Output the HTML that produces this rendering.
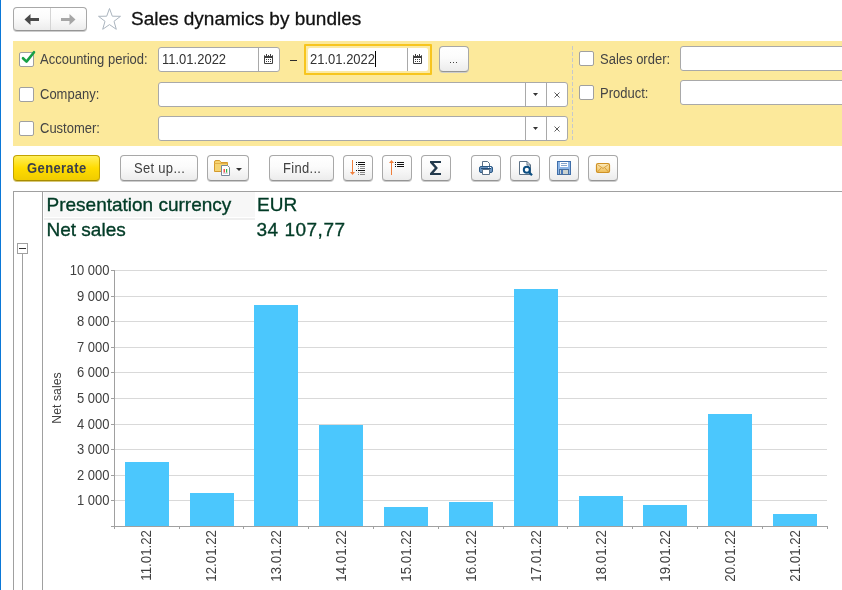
<!DOCTYPE html>
<html><head><meta charset="utf-8">
<style>
*{box-sizing:border-box;margin:0;padding:0}
html,body{width:842px;height:590px;overflow:hidden;background:#fff;font-family:"Liberation Sans",sans-serif;position:relative}
.a{position:absolute}
.t{position:absolute;white-space:nowrap;line-height:1}
.btn{position:absolute;height:26px;border:1px solid #a8a8a8;border-bottom-color:#959595;border-radius:4px;background:linear-gradient(#ffffff 0%,#fbfbfb 45%,#ececec 100%);box-shadow:0 1px 0 #cdcdcd}
.cb{position:absolute;width:15px;height:15px;background:#fff;border:1px solid #a0a0a0;border-radius:2px}
.lbl{position:absolute;white-space:nowrap;font-size:13px;color:#444;line-height:13px;transform:scaleY(1.1);transform-origin:0 0}
.inp{position:absolute;background:#fff;border:1px solid #a9a9a9;border-radius:3px}
.vd{position:absolute;top:0;bottom:0;width:1px;background:#a9a9a9}
.bt{position:absolute;white-space:nowrap;font-size:13px;color:#404040;line-height:13px;letter-spacing:0.3px;transform:scaleY(1.1);transform-origin:0 0}
svg{position:absolute;overflow:visible}
</style></head><body><div style="position:absolute;left:0;top:0;width:842px;height:590px;will-change:transform">
<!-- left blue edge -->
<div class="a" style="left:0;top:0;width:1px;height:590px;background:#0b78d7"></div>

<!-- nav buttons -->
<div class="btn" style="left:13px;top:7px;width:74px;height:24px"></div>
<div class="a" style="left:50px;top:8px;width:1px;height:22px;background:#d4d4d4"></div>
<svg style="left:24px;top:13px" width="16" height="13" viewBox="0 0 16 13"><path d="M0.5 6.5 L6.5 1 V5 H15 V8 H6.5 V12 Z" fill="#4a4a4a"/></svg>
<svg style="left:60px;top:13px" width="16" height="13" viewBox="0 0 16 13"><path d="M15.5 6.5 L9.5 1 V5 H1 V8 H9.5 V12 Z" fill="#a6a6a6"/></svg>
<!-- star -->
<svg style="left:97px;top:7px" width="25" height="24" viewBox="0 0 25 24"><path d="M12.5 1.5 L15.3 9.2 L23.5 9.3 L17 14.3 L19.3 22.3 L12.5 17.6 L5.7 22.3 L8 14.3 L1.5 9.3 L9.7 9.2 Z" fill="none" stroke="#aab4be" stroke-width="1"/></svg>
<div class="t" style="left:131px;top:9px;font-size:19px;color:#111;-webkit-text-stroke:0.3px #111">Sales dynamics by bundles</div>

<!-- filter panel -->
<div class="a" style="left:13px;top:41px;width:829px;height:105px;background:#fce99b"></div>
<!-- row 1 -->
<div class="cb" style="left:19px;top:52px"></div>
<svg style="left:20px;top:49px" width="17" height="16" viewBox="0 0 17 16"><path d="M3 9.2 L6.5 12.6 L14 3.2" fill="none" stroke="#17a045" stroke-width="2.6" stroke-linecap="round" stroke-linejoin="round"/></svg>
<div class="lbl" style="left:40px;top:52px">Accounting period:</div>
<div class="inp" style="left:158px;top:47px;width:122px;height:25px"><div class="vd" style="left:99px"></div></div>
<svg style="left:264px;top:54px" width="10" height="10" viewBox="0 0 10 10" id="cal1"><g fill="#404040"><rect x="0" y="1" width="9" height="9" rx="1"/></g><rect x="1" y="4" width="7" height="5" fill="#fff"/><g fill="#404040"><rect x="2" y="5" width="1" height="1"/><rect x="4" y="5" width="1" height="1"/><rect x="6" y="5" width="1" height="1"/><rect x="2" y="7" width="1" height="1"/><rect x="4" y="7" width="1" height="1"/><rect x="6" y="7" width="1" height="1"/></g><rect x="1" y="1" width="1" height="1" fill="#fff"/><rect x="3" y="1" width="1" height="1" fill="#fff"/><rect x="5" y="1" width="1" height="1" fill="#fff"/><rect x="7" y="1" width="1" height="1" fill="#fff"/><rect x="2" y="0" width="1" height="2" fill="#404040"/><rect x="6" y="0" width="1" height="2" fill="#404040"/></svg>
<div class="t" style="left:162px;top:52px;font-size:13px;color:#333;transform:scaleY(1.1);transform-origin:0 0">11.01.2022</div>
<div class="a" style="left:290px;top:60px;width:7px;height:1px;background:#2d2d2d"></div>
<div class="a" style="left:304px;top:44px;width:128px;height:31px;border:2px solid #f7c51e;border-radius:1px;background:#fbeaa5"></div>
<div class="a" style="left:308px;top:48px;width:120px;height:23px;border-radius:2px;background:#fff"></div>
<div class="a" style="left:407px;top:48px;width:1px;height:23px;background:#a9a9a9"></div>
<svg style="left:413px;top:54px" width="10" height="10" viewBox="0 0 10 10"><g fill="#404040"><rect x="0" y="1" width="9" height="9" rx="1"/></g><rect x="1" y="4" width="7" height="5" fill="#fff"/><g fill="#404040"><rect x="2" y="5" width="1" height="1"/><rect x="4" y="5" width="1" height="1"/><rect x="6" y="5" width="1" height="1"/><rect x="2" y="7" width="1" height="1"/><rect x="4" y="7" width="1" height="1"/><rect x="6" y="7" width="1" height="1"/></g><rect x="1" y="1" width="1" height="1" fill="#fff"/><rect x="3" y="1" width="1" height="1" fill="#fff"/><rect x="5" y="1" width="1" height="1" fill="#fff"/><rect x="7" y="1" width="1" height="1" fill="#fff"/><rect x="2" y="0" width="1" height="2" fill="#404040"/><rect x="6" y="0" width="1" height="2" fill="#404040"/></svg>
<div class="t" style="left:310px;top:52px;font-size:13px;color:#333;transform:scaleY(1.1);transform-origin:0 0">21.01.2022</div>
<div class="a" style="left:375px;top:51px;width:1px;height:16px;background:#000"></div>
<div class="btn" style="left:439px;top:46px;width:30px;height:26px"></div>
<div class="a" style="left:450px;top:62px;width:1px;height:1px;background:#444"></div>
<div class="a" style="left:453px;top:62px;width:1px;height:1px;background:#444"></div>
<div class="a" style="left:456px;top:62px;width:1px;height:1px;background:#444"></div>
<!-- row 2 company -->
<div class="cb" style="left:19px;top:87px"></div>
<div class="lbl" style="left:40px;top:87px">Company:</div>
<div class="inp" style="left:158px;top:82px;width:410px;height:25px"><div class="vd" style="left:366px"></div><div class="vd" style="left:387px"></div></div>
<svg style="left:533px;top:93px" width="5" height="3" viewBox="0 0 5 3"><path d="M0 0 H5 L2.5 3 Z" fill="#333"/></svg>
<svg style="left:554px;top:92px" width="6" height="6" viewBox="0 0 6 6"><path d="M0.5 0.5 L5.5 5.5 M5.5 0.5 L0.5 5.5" stroke="#4a4a4a" stroke-width="0.9"/></svg>
<!-- row 3 customer -->
<div class="cb" style="left:19px;top:121px"></div>
<div class="lbl" style="left:40px;top:121px">Customer:</div>
<div class="inp" style="left:158px;top:116px;width:410px;height:25px"><div class="vd" style="left:366px"></div><div class="vd" style="left:387px"></div></div>
<svg style="left:533px;top:127px" width="5" height="3" viewBox="0 0 5 3"><path d="M0 0 H5 L2.5 3 Z" fill="#333"/></svg>
<svg style="left:554px;top:126px" width="6" height="6" viewBox="0 0 6 6"><path d="M0.5 0.5 L5.5 5.5 M5.5 0.5 L0.5 5.5" stroke="#4a4a4a" stroke-width="0.9"/></svg>
<!-- dashed separator -->
<div class="a" style="left:572px;top:46px;width:1px;height:95px;background:repeating-linear-gradient(#c6c8cc 0 4px,transparent 4px 6px)"></div>
<!-- right col -->
<div class="cb" style="left:579px;top:51px"></div>
<div class="lbl" style="left:600px;top:52px">Sales order:</div>
<div class="inp" style="left:680px;top:46px;width:200px;height:25px"></div>
<div class="cb" style="left:579px;top:85px"></div>
<div class="lbl" style="left:600px;top:86px">Product:</div>
<div class="inp" style="left:680px;top:80px;width:200px;height:25px"></div>

<!-- toolbar -->
<div class="a" style="left:13px;top:155px;width:87px;height:26px;border:1px solid #c2a200;border-bottom-color:#a88c00;border-radius:4px;background:linear-gradient(#ffee5a,#ffdc00 50%,#f0cc00);box-shadow:0 1px 0 #d8c878"></div>
<div class="t" style="left:27px;top:161px;font-size:13px;font-weight:bold;color:#3b3f4c;letter-spacing:0.4px;transform:scaleY(1.1);transform-origin:0 0">Generate</div>
<div class="btn" style="left:120px;top:155px;width:78px"></div>
<div class="bt" style="left:134px;top:161px">Set up...</div>
<div class="btn" style="left:207px;top:155px;width:42px"></div>
<!-- folder + doc icon -->
<svg style="left:213px;top:159px" width="20" height="18" viewBox="0 0 20 18">
<path d="M1.5 12.5 V3 Q1.5 1.5 3 1.5 H6 Q7 1.5 7.5 2.5 L8 3.5 H14.5 V12.5 Z" fill="#f5d472" stroke="#d49a2c" stroke-width="1"/>
<path d="M1.5 4.5 H14.5" stroke="#e2b04a" stroke-width="1"/>
<path d="M8.5 6.5 H14.5 L16.5 8.5 V16.5 H8.5 Z" fill="#fff" stroke="#75889a" stroke-width="1"/>
<rect x="10.6" y="10" width="1.2" height="3.6" fill="#f02828"/><rect x="13" y="10" width="1.2" height="3.6" fill="#28b840"/><rect x="10" y="13.8" width="5" height="0.6" fill="#99a"/>
</svg>
<svg style="left:236px;top:168px" width="6" height="3" viewBox="0 0 6 3"><path d="M0 0 H6 L3 3 Z" fill="#333"/></svg>
<div class="btn" style="left:269px;top:155px;width:65px"></div>
<div class="bt" style="left:283px;top:161px">Find...</div>
<!-- sort desc -->
<div class="btn" style="left:343px;top:155px;width:30px"></div>
<svg style="left:343px;top:155px" width="30" height="26" viewBox="0 0 30 26">
<rect x="9" y="5" width="1" height="14" fill="#f07f3c"/><path d="M7 17 H12 L9.5 20 Z" fill="#f07f3c"/>
<g fill="#111"><rect x="13" y="7" width="1" height="1"/><rect x="15" y="7" width="7" height="1"/><rect x="13" y="9" width="1" height="1"/><rect x="15" y="9" width="7" height="1"/><rect x="13" y="15" width="1" height="1"/><rect x="15" y="15" width="7" height="1"/></g>
<g fill="#888"><rect x="15" y="11" width="1" height="1"/><rect x="17" y="11" width="5" height="1"/><rect x="15" y="13" width="1" height="1"/><rect x="17" y="13" width="5" height="1"/><rect x="15" y="17" width="1" height="1"/><rect x="17" y="17" width="5" height="1"/><rect x="15" y="19" width="1" height="1"/><rect x="17" y="19" width="5" height="1"/></g>
</svg>
<!-- sort asc -->
<div class="btn" style="left:382px;top:155px;width:30px"></div>
<svg style="left:382px;top:155px" width="30" height="26" viewBox="0 0 30 26">
<rect x="9" y="6" width="1" height="14" fill="#f07f3c"/><path d="M7 8 H12 L9.5 5 Z" fill="#f07f3c"/>
<g fill="#111"><rect x="13" y="7" width="1" height="1"/><rect x="15" y="7" width="7" height="1"/><rect x="13" y="9" width="1" height="1"/><rect x="15" y="9" width="7" height="1"/><rect x="13" y="11" width="1" height="1"/><rect x="15" y="11" width="7" height="1"/></g>
</svg>
<!-- sigma -->
<div class="btn" style="left:421px;top:155px;width:30px"></div>
<svg style="left:421px;top:155px" width="30" height="26" viewBox="0 0 30 26"><path d="M9 6 H20 V8 H12.6 L16.9 13 L12.6 18 H20 V20 H9 V18.3 L13.8 13 L9 7.7 Z" fill="#233a4d"/></svg>
<!-- print -->
<div class="btn" style="left:471px;top:155px;width:30px"></div>
<svg style="left:471px;top:155px" width="30" height="26" viewBox="0 0 30 26">
<path d="M11.5 6.5 H16.5 L18.5 8.5 V11.5 H11.5 Z" fill="#fff" stroke="#5a7088" stroke-width="1"/>
<rect x="8.5" y="11.5" width="13" height="6" rx="1.5" fill="#6f97c2" stroke="#2c5a86" stroke-width="1"/>
<rect x="10" y="13" width="10" height="1" fill="#244f7a"/>
<rect x="17" y="12" width="1" height="1" fill="#fff"/><rect x="19" y="12" width="1" height="1" fill="#fff"/>
<path d="M11.5 14.5 H18.5 V19.5 H11.5 Z" fill="#fff" stroke="#5a7088" stroke-width="1"/>
</svg>
<!-- preview -->
<div class="btn" style="left:510px;top:155px;width:30px"></div>
<svg style="left:510px;top:155px" width="30" height="26" viewBox="0 0 30 26">
<path d="M9.5 6.5 H17 L20.5 10 V19.5 H9.5 Z" fill="#fff" stroke="#5d7185" stroke-width="1"/>
<path d="M17 6.5 V10 H20.5" fill="none" stroke="#5d7185" stroke-width="1"/>
<circle cx="16.8" cy="14.8" r="3" fill="#fff" stroke="#0d4f82" stroke-width="2"/>
<path d="M18.8 17 L22 20.3" stroke="#0d4f82" stroke-width="2.2"/>
</svg>
<!-- save -->
<div class="btn" style="left:549px;top:155px;width:30px"></div>
<svg style="left:549px;top:155px" width="30" height="26" viewBox="0 0 30 26">
<rect x="8.5" y="6.5" width="13" height="13" fill="#8cb5e6" stroke="#3f6ea9" stroke-width="1"/>
<rect x="11" y="7" width="8" height="5" fill="#fff"/>
<rect x="12" y="8" width="6" height="1" fill="#86a6cc"/><rect x="12" y="10" width="6" height="1" fill="#86a6cc"/>
<rect x="10.5" y="14.5" width="9" height="5" fill="#ccd3d0" stroke="#4a6f9c" stroke-width="1"/>
<rect x="12" y="15" width="2" height="4" fill="#4a78b8"/>
</svg>
<!-- mail -->
<div class="btn" style="left:588px;top:155px;width:30px"></div>
<svg style="left:588px;top:155px" width="30" height="26" viewBox="0 0 30 26">
<defs><linearGradient id="mg" x1="0" y1="0" x2="0" y2="1"><stop offset="0" stop-color="#fcebbd"/><stop offset="1" stop-color="#eebd55"/></linearGradient></defs>
<rect x="8.5" y="8.5" width="13" height="9" rx="1.5" fill="url(#mg)" stroke="#cf9226" stroke-width="1.2"/>
<path d="M9.5 9.5 L15 13.5 L20.5 9.5 M9.5 17 L13 13 M20.5 17 L17 13" fill="none" stroke="#d29a38" stroke-width="0.9"/>
</svg>

<!-- report frame -->
<div class="a" style="left:13px;top:191px;width:829px;height:1px;background:#a0a0a0"></div>
<div class="a" style="left:13px;top:191px;width:1px;height:399px;background:#a0a0a0"></div>
<div class="a" style="left:42px;top:191px;width:1px;height:399px;background:#a0a0a0"></div>
<div class="a" style="left:17px;top:243px;width:11px;height:11px;border:1px solid #a0a0a0;background:#fff"></div>
<div class="a" style="left:19px;top:248px;width:7px;height:1px;background:#333"></div>
<div class="a" style="left:22px;top:254px;width:1px;height:336px;background:#a0a0a0"></div>
<div class="a" style="left:44px;top:192px;width:211px;height:25px;background:#f7f7f7"></div>
<div class="a" style="left:44px;top:218px;width:211px;height:2px;background:#efefef"></div>
<div class="t" style="left:46.5px;top:195px;font-size:19px;color:#003b26;-webkit-text-stroke:0.35px #003b26">Presentation currency</div>
<div class="t" style="left:257px;top:195px;font-size:19px;color:#003b26;-webkit-text-stroke:0.35px #003b26">EUR</div>
<div class="t" style="left:46.5px;top:219.5px;font-size:19px;color:#003b26;-webkit-text-stroke:0.35px #003b26">Net sales</div>
<div class="t" style="left:256.5px;top:219.5px;font-size:19px;color:#003b26;-webkit-text-stroke:0.35px #003b26;letter-spacing:0.5px">34 107,77</div>

<!-- chart -->
<svg style="left:0;top:0" width="842" height="590">
<g fill="#d9d9d9">
<rect x="114" y="270" width="713" height="1"/>
<rect x="114" y="296" width="713" height="1"/>
<rect x="114" y="321" width="713" height="1"/>
<rect x="114" y="347" width="713" height="1"/>
<rect x="114" y="372" width="713" height="1"/>
<rect x="114" y="398" width="713" height="1"/>
<rect x="114" y="424" width="713" height="1"/>
<rect x="114" y="449" width="713" height="1"/>
<rect x="114" y="475" width="713" height="1"/>
<rect x="114" y="500" width="713" height="1"/>
</g>
<g fill="#4bc7fd">
<rect x="125" y="462" width="44" height="64"/>
<rect x="190" y="493" width="44" height="33"/>
<rect x="254" y="305" width="44" height="221"/>
<rect x="319" y="425" width="44" height="101"/>
<rect x="384" y="507" width="44" height="19"/>
<rect x="449" y="502" width="44" height="24"/>
<rect x="514" y="289" width="44" height="237"/>
<rect x="579" y="496" width="44" height="30"/>
<rect x="643" y="505" width="44" height="21"/>
<rect x="708" y="414" width="44" height="112"/>
<rect x="773" y="514" width="44" height="12"/>
</g>
<g fill="#a0a0a0">
<rect x="114" y="270" width="1" height="257"/>
<rect x="111" y="526" width="717" height="1"/>
<rect x="111" y="270" width="3" height="1"/>
<rect x="111" y="296" width="3" height="1"/>
<rect x="111" y="321" width="3" height="1"/>
<rect x="111" y="347" width="3" height="1"/>
<rect x="111" y="372" width="3" height="1"/>
<rect x="111" y="398" width="3" height="1"/>
<rect x="111" y="424" width="3" height="1"/>
<rect x="111" y="449" width="3" height="1"/>
<rect x="111" y="475" width="3" height="1"/>
<rect x="111" y="500" width="3" height="1"/>
<rect x="114" y="526" width="1" height="3"/>
<rect x="179" y="526" width="1" height="3"/>
<rect x="243" y="526" width="1" height="3"/>
<rect x="308" y="526" width="1" height="3"/>
<rect x="373" y="526" width="1" height="3"/>
<rect x="438" y="526" width="1" height="3"/>
<rect x="503" y="526" width="1" height="3"/>
<rect x="567" y="526" width="1" height="3"/>
<rect x="632" y="526" width="1" height="3"/>
<rect x="697" y="526" width="1" height="3"/>
<rect x="762" y="526" width="1" height="3"/>
<rect x="827" y="526" width="1" height="3"/>
</g>
<g font-family="Liberation Sans" font-size="13" fill="#404040" text-anchor="end">
<text x="109.5" y="275" transform="translate(0,275) scale(1,1.1) translate(0,-275)">10 000</text>
<text x="109.5" y="301" transform="translate(0,301) scale(1,1.1) translate(0,-301)">9 000</text>
<text x="109.5" y="326" transform="translate(0,326) scale(1,1.1) translate(0,-326)">8 000</text>
<text x="109.5" y="352" transform="translate(0,352) scale(1,1.1) translate(0,-352)">7 000</text>
<text x="109.5" y="377" transform="translate(0,377) scale(1,1.1) translate(0,-377)">6 000</text>
<text x="109.5" y="403" transform="translate(0,403) scale(1,1.1) translate(0,-403)">5 000</text>
<text x="109.5" y="429" transform="translate(0,429) scale(1,1.1) translate(0,-429)">4 000</text>
<text x="109.5" y="454" transform="translate(0,454) scale(1,1.1) translate(0,-454)">3 000</text>
<text x="109.5" y="480" transform="translate(0,480) scale(1,1.1) translate(0,-480)">2 000</text>
<text x="109.5" y="505" transform="translate(0,505) scale(1,1.1) translate(0,-505)">1 000</text>
</g>
<g font-family="Liberation Sans" font-size="13.3" fill="#404040" text-anchor="end">
<text transform="translate(151,530) rotate(-90) scale(1,1.08)">11.01.22</text>
<text transform="translate(216,530) rotate(-90) scale(1,1.08)">12.01.22</text>
<text transform="translate(281,530) rotate(-90) scale(1,1.08)">13.01.22</text>
<text transform="translate(346,530) rotate(-90) scale(1,1.08)">14.01.22</text>
<text transform="translate(411,530) rotate(-90) scale(1,1.08)">15.01.22</text>
<text transform="translate(476,530) rotate(-90) scale(1,1.08)">16.01.22</text>
<text transform="translate(541,530) rotate(-90) scale(1,1.08)">17.01.22</text>
<text transform="translate(606,530) rotate(-90) scale(1,1.08)">18.01.22</text>
<text transform="translate(670,530) rotate(-90) scale(1,1.08)">19.01.22</text>
<text transform="translate(735,530) rotate(-90) scale(1,1.08)">20.01.22</text>
<text transform="translate(800,530) rotate(-90) scale(1,1.08)">21.01.22</text>
</g>
<text font-family="Liberation Sans" font-size="12.3" fill="#404040" text-anchor="middle" transform="translate(60.5,398) rotate(-90)">Net sales</text>
</svg>
</div></body></html>
